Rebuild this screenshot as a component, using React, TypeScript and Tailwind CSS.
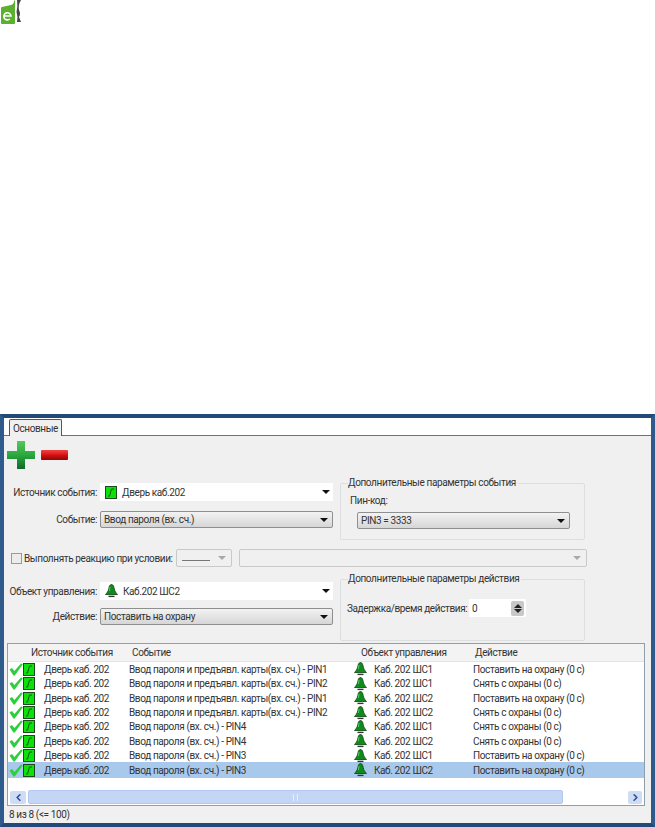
import { ChevronLeft, ChevronRight } from 'lucide-react';

const rows = [
  ['Ввод пароля и предъявл. карты(вх. сч.) - PIN1', 'Каб. 202 ШС1', 'Поставить на охрану (0 с)'],
  ['Ввод пароля и предъявл. карты(вх. сч.) - PIN2', 'Каб. 202 ШС1', 'Снять с охраны (0 с)'],
  ['Ввод пароля и предъявл. карты(вх. сч.) - PIN1', 'Каб. 202 ШС2', 'Поставить на охрану (0 с)'],
  ['Ввод пароля и предъявл. карты(вх. сч.) - PIN2', 'Каб. 202 ШС2', 'Снять с охраны (0 с)'],
  ['Ввод пароля (вх. сч.) - PIN4', 'Каб. 202 ШС1', 'Снять с охраны (0 с)'],
  ['Ввод пароля (вх. сч.) - PIN4', 'Каб. 202 ШС2', 'Снять с охраны (0 с)'],
  ['Ввод пароля (вх. сч.) - PIN3', 'Каб. 202 ШС1', 'Поставить на охрану (0 с)'],
  ['Ввод пароля (вх. сч.) - PIN3', 'Каб. 202 ШС2', 'Поставить на охрану (0 с)'],
];

function Logo() {
  return (
    <svg width="24" height="25" viewBox="0 0 24 25">
      <path d="M1 8 Q1 7 2 7 L11 5 Q14 4 14 1 L15 0 V23 Q15 24 14 24 H2 Q1 24 1 23 Z" fill="#5bb030" />
      <path d="M4.5 16 H11 A3.6 3.6 0 1 0 9.8 19" fill="none" stroke="#fff" strokeWidth="1.6" />
      <path d="M17 0 H21 Q18 5 19 10 Q21 14 19 17 L21 22 H17 Q18 16 16.5 12 Q18 6 17 0 Z" fill="#454545" />
    </svg>
  );
}

function Plus() {
  return (
    <svg width="28" height="28" viewBox="0 0 28 28">
      <defs>
        <linearGradient id="plusg" x1="0" y1="0" x2="0" y2="1">
          <stop offset="0" stopColor="#54c95a" />
          <stop offset="0.5" stopColor="#2ba83e" />
          <stop offset="1" stopColor="#0d6b2c" />
        </linearGradient>
      </defs>
      <path d="M10 0 H18 V10 H28 V18 H18 V28 H10 V18 H0 V10 H10 Z" fill="url(#plusg)" />
    </svg>
  );
}

function SensorIcon() {
  return (
    <svg width="12" height="13" viewBox="0 0 12 13" className="shrink-0">
      <rect x="0.5" y="0.5" width="11" height="12" fill="#0ce10c" stroke="#1d4a1d" />
      <path d="M3 10 H4.5 L6.5 3 H9" fill="none" stroke="#0a5a0a" strokeWidth="1" />
    </svg>
  );
}

function Check() {
  return (
    <svg width="14" height="13" viewBox="0 0 14 13" className="shrink-0">
      <path d="M0.5 6.5 L3 5 L5.4 8 L12 0.5 L13.8 1.2 L5.8 12.5 L4.4 12.5 Z" fill="#2dd03c" />
    </svg>
  );
}

function Bell() {
  return (
    <svg width="13" height="14" viewBox="0 0 13 14" className="shrink-0">
      <path d="M6.5 0.5 C8 0.5 8.8 2 9.2 4.5 C9.6 7 11 9 12.5 10.5 H0.5 C2 9 3.4 7 3.8 4.5 C4.2 2 5 0.5 6.5 0.5 Z" fill="#0f8a1c" stroke="#0a4410" strokeWidth="0.8" />
      <path d="M5 3 L4.4 7" stroke="#6fdc78" strokeWidth="0.8" />
      <path d="M3.5 12.4 H9.5" stroke="#333" strokeWidth="1.4" />
    </svg>
  );
}

function Caret({ faded = false }: { faded?: boolean }) {
  return (
    <span
      className={`h-0 w-0 border-x-[4px] border-t-[4px] border-x-transparent ${
        faded ? 'border-t-[#a9a9a9]' : 'border-t-[#111111]'
      }`}
    />
  );
}

// white editable combo
function EditCombo({ icon, text }: { icon: React.ReactNode; text: string }) {
  return (
    <div className="flex h-[18px] w-[233px] items-center bg-white pl-[5px] pr-[3px]">
      {icon}
      <span className="ml-[5px] flex-1 whitespace-nowrap">{text}</span>
      <Caret />
    </div>
  );
}

// grey push-button style combo
function ButtonCombo({ text, width }: { text: string; width: string }) {
  return (
    <div className={`flex h-[17px] items-center rounded-[2px] border border-[#8e8f8f] bg-linear-to-b from-[#f3f3f3] to-[#d6d6d6] pl-[3px] pr-[4px] ${width}`}>
      <span className="flex-1 whitespace-nowrap">{text}</span>
      <Caret />
    </div>
  );
}

function GroupBox({ title, height, children }: { title: string; height: string; children: React.ReactNode }) {
  return (
    <div className={`relative ml-[7px] w-[245px] rounded-[2px] border border-[#dcdfe0] ${height}`}>
      <span className="absolute -top-[8px] left-[7px] bg-[#f0f0f0] pr-[2px] leading-[14px]">{title}</span>
      {children}
    </div>
  );
}

function Label({ text }: { text: string }) {
  return <span className="mr-[3px] w-[93px] whitespace-nowrap text-right">{text}</span>;
}

export default function App() {
  return (
    <div className="h-[827px] w-[655px] overflow-hidden bg-white text-[10px] tracking-[-0.38px] text-[#333333] [font-family:'Roboto',sans-serif]">
      <div className="h-[414px]">
        <Logo />
      </div>

      <div className="flex h-[413px] flex-col border-x-[4px] border-y-[4px] border-x-[#2e5a8c] border-y-[#23497a] bg-[#f0f0f0]">
        {/* tabs */}
        <div className="flex h-[18px] shrink-0 items-end border-b border-[#6b7378] bg-white pl-[5px]">
          <div className="-mb-px flex h-[17px] w-[53px] items-center justify-center rounded-t-[2px] border-x border-t border-[#4a5a60] bg-[#f0f0f0]">
            Основные
          </div>
        </div>

        {/* toolbar */}
        <div className="mt-[5px] flex items-center pl-[3px]">
          <Plus />
          <div className="ml-[6px] h-[10px] w-[27px] rounded-[1px] bg-linear-to-b from-[#f04040] via-[#d80f0f] to-[#8a0808]" />
        </div>

        {/* event block */}
        <div className="mt-[14px] flex h-[57px]">
          <div className="flex flex-col">
            <div className="flex items-center">
              <Label text="Источник события:" />
              <EditCombo icon={<SensorIcon />} text="Дверь каб.202" />
            </div>
            <div className="mt-[10px] flex items-center">
              <Label text="Событие:" />
              <ButtonCombo text="Ввод пароля (вх. сч.)" width="w-[233px]" />
            </div>
          </div>
          <GroupBox title="Дополнительные параметры события" height="h-[57px]">
            <div className="mt-[10px] pl-[9px] leading-[14px]">Пин-код:</div>
            <div className="mt-[4px] pl-[16px]">
              <ButtonCombo text="PIN3 = 3333" width="w-[213px]" />
            </div>
          </GroupBox>
        </div>

        {/* condition */}
        <div className="mt-[9px] flex h-[18px] items-center pl-[7px]">
          <div className="h-[11px] w-[11px] shrink-0 border border-[#9a9a9a] bg-[#ececec]" />
          <span className="ml-[2px] w-[148px] whitespace-nowrap">Выполнять реакцию при условии:</span>
          <div className="ml-[4px] flex h-[18px] w-[56px] items-center justify-between rounded-[2px] border border-[#c9c9c9] pl-[5px] pr-[5px]">
            <span className="mt-[4px] h-px w-[28px] bg-[#777777]" />
            <Caret faded />
          </div>
          <div className="ml-[7px] flex h-[18px] w-[348px] items-center justify-end rounded-[2px] border border-[#c9c9c9] pr-[5px]">
            <Caret faded />
          </div>
        </div>

        {/* control block */}
        <div className="mt-[12px] flex h-[62px]">
          <div className="flex flex-col">
            <div className="mt-[3px] flex items-center">
              <Label text="Объект управления:" />
              <EditCombo icon={<Bell />} text="Каб.202 ШС2" />
            </div>
            <div className="mt-[8px] flex items-center">
              <Label text="Действие:" />
              <ButtonCombo text="Поставить на охрану" width="w-[233px]" />
            </div>
          </div>
          <GroupBox title="Дополнительные параметры действия" height="h-[62px]">
            <div className="mt-[19px] flex items-center pl-[6px]">
              <span className="w-[122px] whitespace-nowrap">Задержка/время действия:</span>
              <div className="flex h-[18px] w-[57px] items-center bg-white pl-[3px] pr-[2px]">
                <span className="flex-1">0</span>
                <div className="flex h-[15px] w-[13px] flex-col items-center justify-center gap-px rounded-[2px] bg-[#c8c8c8]">
                  <span className="h-0 w-0 border-x-[4px] border-b-[4px] border-x-transparent border-b-[#222222]" />
                  <span className="h-0 w-0 border-x-[4px] border-t-[4px] border-x-transparent border-t-[#222222]" />
                </div>
              </div>
            </div>
          </GroupBox>
        </div>

        {/* table */}
        <div className="ml-[3px] mr-[6px] mt-[2px] flex h-[163px] flex-col border border-[#8da0ab] bg-white">
          <div className="flex h-[18px] shrink-0 items-center border-b border-[#e3e3e3] bg-[#f3f3f3]">
            <span className="ml-[23px] w-[101px]">Источник события</span>
            <span className="w-[229px]">Событие</span>
            <span className="w-[114px]">Объект управления</span>
            <span>Действие</span>
          </div>
          <div className="flex-1">
            {rows.map((row, i) => (
              <div
                key={i}
                className={`flex items-center whitespace-nowrap ${i === 7 ? '-mt-px h-[15.45px] bg-[#a9c9ec] pt-px' : 'h-[14.45px]'}`}
              >
                <div className="ml-[1px] flex w-[35px] shrink-0 items-center">
                  <Check />
                  <SensorIcon />
                </div>
                <span className="w-[85px] shrink-0">Дверь каб. 202</span>
                <span className="w-[225px] shrink-0">{row[0]}</span>
                <span className="w-[20px] shrink-0">
                  <Bell />
                </span>
                <span className="w-[99px] shrink-0">{row[1]}</span>
                <span>{row[2]}</span>
              </div>
            ))}
          </div>
          <div className="mb-px flex h-[14px] shrink-0 items-center px-[2px]">
            <div className="flex h-[13px] w-[16px] items-center justify-center rounded-[2px] bg-[#cfdcf3] text-[#2a4f9a]">
              <ChevronLeft size={11} strokeWidth={3.5} />
            </div>
            <div className="ml-[2px] flex h-[14px] w-[535px] items-center justify-center rounded-[2px] border border-[#b3c8ee] bg-[#c4d5f6]">
              <span className="h-[7px] w-[5px] border-x border-[#e8eefb]" />
            </div>
            <div className="flex-1" />
            <div className="flex h-[13px] w-[14px] items-center justify-center rounded-[2px] bg-[#cfdcf3] text-[#2a4f9a]">
              <ChevronRight size={11} strokeWidth={3.5} />
            </div>
          </div>
        </div>

        {/* status */}
        <div className="flex flex-1 items-center pl-[5px]">8 из 8 (&lt;= 100)</div>
      </div>
    </div>
  );
}
